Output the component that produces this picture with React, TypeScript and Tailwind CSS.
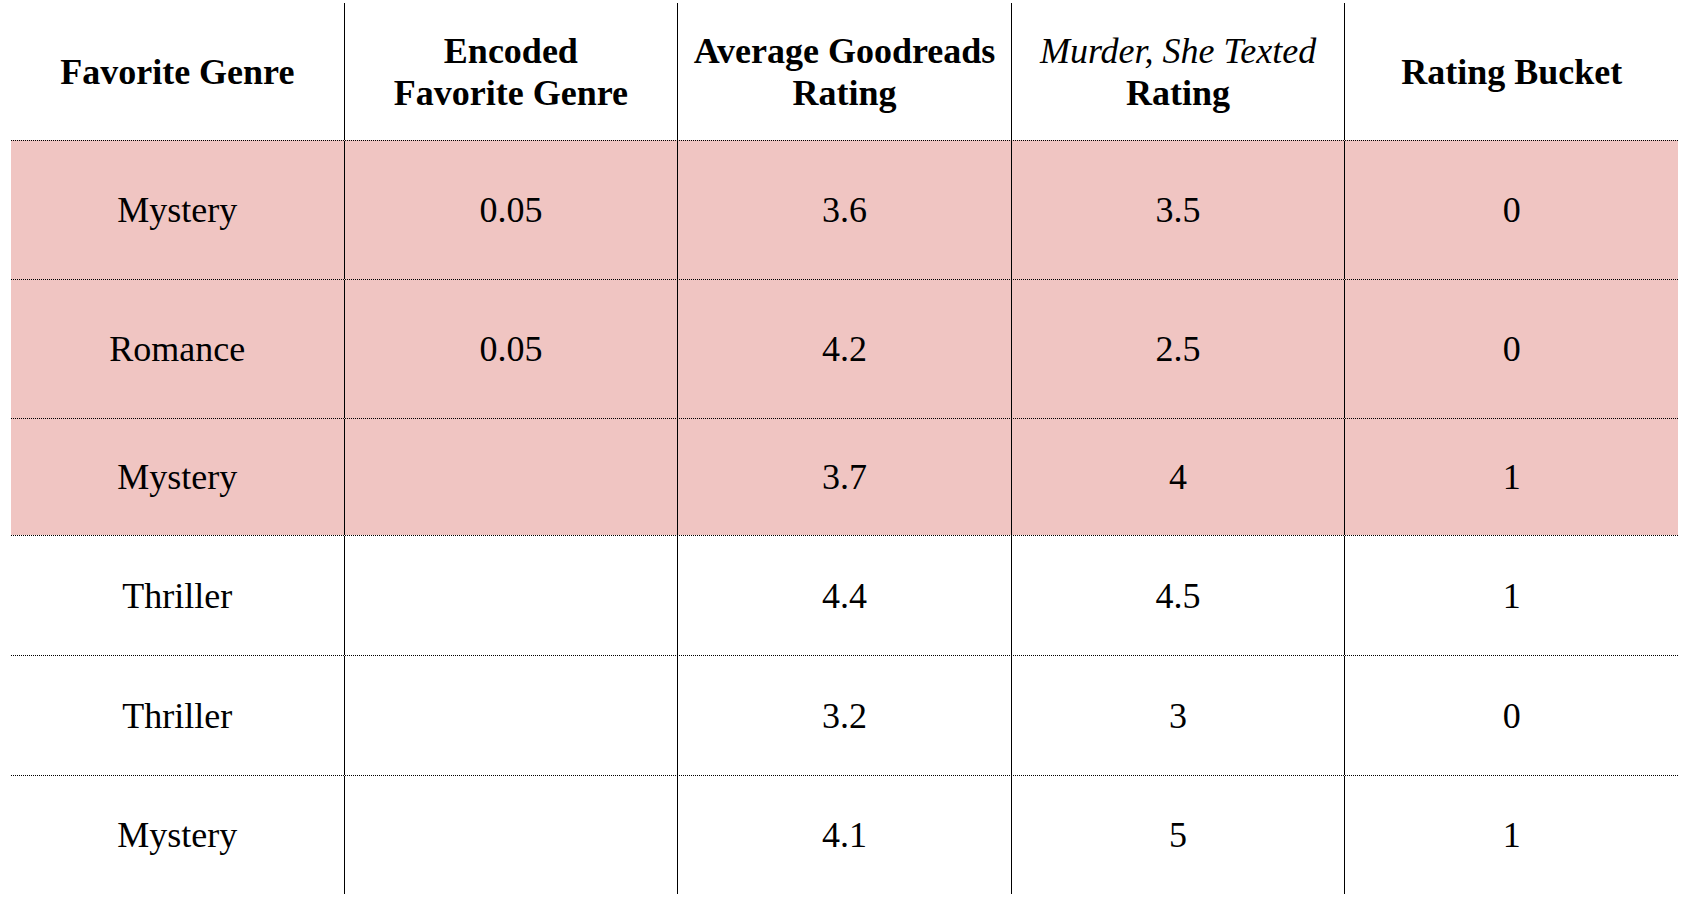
import React from "react";

interface Row {
  genre: string;
  encoded: string;
  goodreads: string;
  murder: string;
  bucket: string;
  highlight: boolean;
  height: string;
}

const rows: Row[] = [
  { genre: "Mystery", encoded: "0.05", goodreads: "3.6", murder: "3.5", bucket: "0", highlight: true, height: "h-[139px]" },
  { genre: "Romance", encoded: "0.05", goodreads: "4.2", murder: "2.5", bucket: "0", highlight: true, height: "h-[139px]" },
  { genre: "Mystery", encoded: "", goodreads: "3.7", murder: "4", bucket: "1", highlight: true, height: "h-[117px]" },
  { genre: "Thriller", encoded: "", goodreads: "4.4", murder: "4.5", bucket: "1", highlight: false, height: "h-[120px]" },
  { genre: "Thriller", encoded: "", goodreads: "3.2", murder: "3", bucket: "0", highlight: false, height: "h-[120px]" },
  { genre: "Mystery", encoded: "", goodreads: "4.1", murder: "5", bucket: "1", highlight: false, height: "h-[119px]" },
];

const Cell: React.FC<{ children?: React.ReactNode; last?: boolean }> = ({ children, last }) => (
  <div
    className={`flex-1 flex flex-col items-center justify-center text-center ${
      last ? "" : "border-r border-black"
    }`}
  >
    {children}
  </div>
);

export default function App() {
  return (
    <div
      className="w-[1692px] h-[914px] bg-white text-black pt-[3px] pl-[11px]"
      style={{ fontFamily: '"Liberation Serif", "Times New Roman", serif' }}
    >
      <div className="w-[1667px] flex flex-col">
        <div className="flex h-[137px] text-[36px] leading-[42px] font-bold">
          <Cell>Favorite Genre</Cell>
          <Cell>
            <span>Encoded</span>
            <span>Favorite Genre</span>
          </Cell>
          <Cell>
            <span>Average Goodreads</span>
            <span>Rating</span>
          </Cell>
          <Cell>
            <span className="italic font-normal">Murder, She Texted</span>
            <span>Rating</span>
          </Cell>
          <Cell last>Rating Bucket</Cell>
        </div>
        {rows.map((r, i) => (
          <div
            key={i}
            className={`flex ${r.height} border-t border-dotted border-black text-[36px] leading-[42px] ${
              r.highlight ? "bg-[#f0c5c2]" : "bg-white"
            }`}
          >
            <Cell>{r.genre}</Cell>
            <Cell>{r.encoded}</Cell>
            <Cell>{r.goodreads}</Cell>
            <Cell>{r.murder}</Cell>
            <Cell last>{r.bucket}</Cell>
          </div>
        ))}
      </div>
    </div>
  );
}
